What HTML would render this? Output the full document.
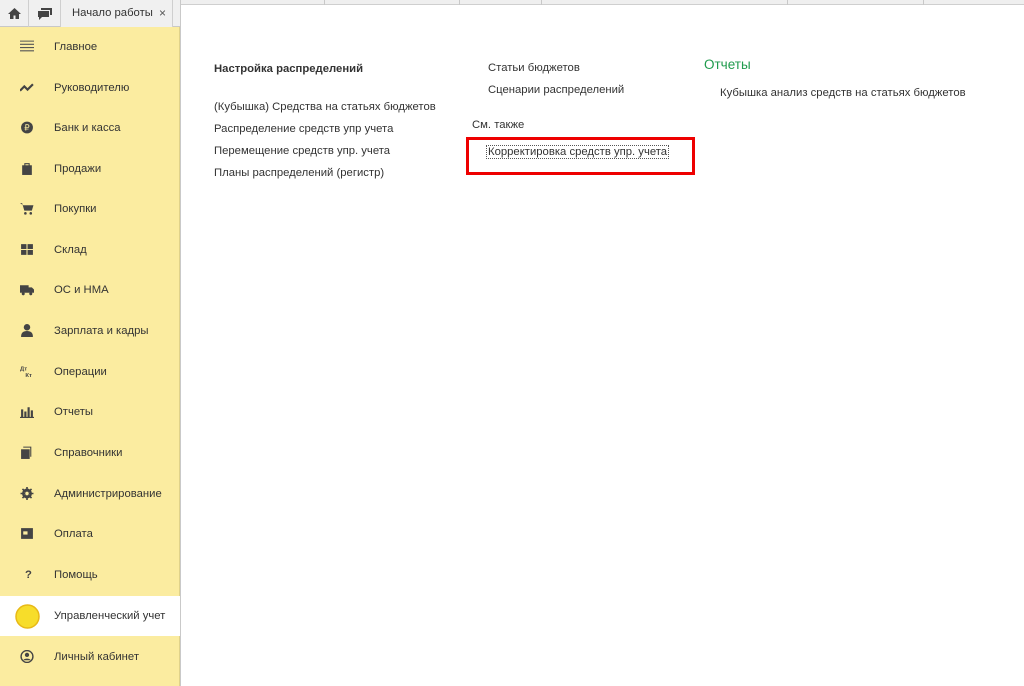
<!DOCTYPE html>
<html><head><meta charset="utf-8"><style>
*{margin:0;padding:0;box-sizing:border-box}
body{width:1024px;height:686px;overflow:hidden;background:#fff;font-family:"Liberation Sans",Arial,sans-serif;color:#333;position:relative}
#top{position:absolute;left:0;top:0;width:181px;height:27px;background:#f0f0f0;border-bottom:1px solid #c8c8c8}
.tb{position:absolute;top:0;height:27px;border-right:1px solid #cfcfcf}
#strip{position:absolute;left:181px;top:0;right:0;height:5px;background:#efefef;border-bottom:1px solid #cfcfcf}
.sep{position:absolute;top:0;width:1px;height:5px;background:#c8c8c8}
#side{position:absolute;left:0;top:27px;width:180px;height:659px;background:#fbeca0;border-right:1px solid #e0d28a}
#vline{position:absolute;left:180px;top:0;width:1px;height:686px;background:#c9c9c9}
.it{position:absolute;left:0;width:180px;height:40px;font-size:11.3px;line-height:40px}
.it span{position:absolute;left:54px}
.ic{position:absolute;left:20px;top:13px;width:14px;height:13px}
.t{position:absolute;font-size:11.3px;white-space:nowrap;color:#333}
</style></head><body>
<div id="top">
 <div class="tb" style="left:0;width:29px"><svg style="position:absolute;left:8px;top:8px" width="13" height="11" viewBox="0 0 13 11"><path d="M6.5 0L0 6h2v5h3.5V7.5h2V11H11V6h2z" fill="#444"/></svg></div>
 <div class="tb" style="left:29px;width:32px"><svg style="position:absolute;left:9px;top:8px" width="14" height="12" viewBox="0 0 14 12"><path d="M3 0h11v7h-2V2H3z M0 3h11v6H4l-3 3V9H0z" fill="#444"/></svg></div>
 <div class="tb" style="left:61px;width:112px;background:#f0f0f0"><span style="position:absolute;left:11px;top:7px;font-size:11.3px;color:#333">Начало работы</span><span style="position:absolute;left:98px;top:6px;font-size:12px;color:#555">×</span></div>
</div>
<div id="strip"><div class="sep" style="left:143px"></div><div class="sep" style="left:278px"></div><div class="sep" style="left:360px"></div><div class="sep" style="left:606px"></div><div class="sep" style="left:742px"></div></div>
<div id="side">
<div class="it" style="top:0"><svg class="ic" viewBox="0 0 13 12"><path d="M0 1h13M0 4h13M0 7h13M0 10h13" stroke="#555" stroke-width="1"/></svg><span>Главное</span></div>
<div class="it" style="top:41px"><svg class="ic" viewBox="0 0 13 12"><path d="M0 9l4-4 3 3 5-5" stroke="#444" stroke-width="2" fill="none"/></svg><span>Руководителю</span></div>
<div class="it" style="top:81px"><svg class="ic" viewBox="0 0 13 12"><circle cx="6.5" cy="6" r="5.5" fill="#444"/><text x="4" y="9" font-size="8" fill="#fbeca0" font-family="Liberation Sans">₽</text></svg><span>Банк и касса</span></div>
<div class="it" style="top:122px"><svg class="ic" viewBox="0 0 13 12"><path d="M2 3h9v9H2z" fill="#444"/><path d="M4.5 4V1.5h4V4" stroke="#444" fill="none"/></svg><span>Продажи</span></div>
<div class="it" style="top:162px"><svg class="ic" viewBox="0 0 13 12"><path d="M0 1h2l2 7h7l1.5-5H3" fill="#444"/><circle cx="5" cy="10.5" r="1.2" fill="#444"/><circle cx="10" cy="10.5" r="1.2" fill="#444"/></svg><span>Покупки</span></div>
<div class="it" style="top:203px"><svg class="ic" viewBox="0 0 13 12"><path d="M1 1h5v4.5H1zM7 1h5v4.5H7zM1 6.5h5V11H1zM7 6.5h5V11H7z" fill="#444"/></svg><span>Склад</span></div>
<div class="it" style="top:243px"><svg class="ic" viewBox="0 0 13 12"><path d="M0 2h8v7H0zM8 4h3l2 2v3H8z" fill="#444"/><circle cx="3" cy="10" r="1.4" fill="#444"/><circle cx="10" cy="10" r="1.4" fill="#444"/></svg><span>ОС и НМА</span></div>
<div class="it" style="top:284px"><svg class="ic" viewBox="0 0 13 12"><circle cx="6.5" cy="3" r="3" fill="#444"/><path d="M1 12c0-4 2-5.5 5.5-5.5S12 8 12 12z" fill="#444"/></svg><span>Зарплата и кадры</span></div>
<div class="it" style="top:325px"><svg class="ic" viewBox="0 0 13 12"><text x="0" y="5" font-size="5.5" fill="#444" font-family="Liberation Sans" font-weight="bold">Дт</text><text x="5" y="11" font-size="5.5" fill="#444" font-family="Liberation Sans" font-weight="bold">Кт</text></svg><span>Операции</span></div>
<div class="it" style="top:365px"><svg class="ic" viewBox="0 0 13 12"><path d="M1 4h2v7H1zM4 6h2v5H4zM7 2h2v9H7zM10 5h2v6h-2zM0 11h13v1H0z" fill="#444"/></svg><span>Отчеты</span></div>
<div class="it" style="top:406px"><svg class="ic" viewBox="0 0 13 12"><path d="M1 3h8v9H1z" fill="#444"/><path d="M3 1h7v9" stroke="#444" fill="none"/></svg><span>Справочники</span></div>
<div class="it" style="top:447px"><svg class="ic" viewBox="0 0 13 12"><circle cx="6.5" cy="6" r="3.5" stroke="#444" stroke-width="2.2" fill="none"/><path d="M6.5 0v12M0.5 6h12M2.3 1.8l8.4 8.4M10.7 1.8l-8.4 8.4" stroke="#444" stroke-width="1.5"/><circle cx="6.5" cy="6" r="1.6" fill="#fbeca0"/></svg><span>Администрирование</span></div>
<div class="it" style="top:487px"><svg class="ic" viewBox="0 0 13 12"><path d="M1 1h11v10H1z" fill="#444"/><path d="M3 4h4v3H3z" fill="#fbeca0"/></svg><span>Оплата</span></div>
<div class="it" style="top:528px"><span style="left:25px;font-weight:bold;color:#444">?</span><span>Помощь</span></div>
<div class="it" style="top:569px;background:#fff"><svg style="position:absolute;left:15px;top:8px" width="25" height="25"><circle cx="12.5" cy="12.5" r="11.5" fill="#f7dd2a" stroke="#e8b917" stroke-width="1.5"/></svg><span>Управленческий учет</span></div>
<div class="it" style="top:610px"><svg class="ic" viewBox="0 0 13 12"><circle cx="6.5" cy="6" r="5.5" stroke="#444" stroke-width="1.3" fill="none"/><circle cx="6.5" cy="4.5" r="2" fill="#444"/><path d="M3 9.5c1-2 6-2 7 0" fill="#444"/></svg><span>Личный кабинет</span></div>
</div>
<div id="vline"></div>
<div class="t" style="left:214px;top:63px;font-weight:bold">Настройка распределений</div>
<div class="t" style="left:214px;top:101px">(Кубышка) Средства на статьях бюджетов</div>
<div class="t" style="left:214px;top:123px">Распределение средств упр учета</div>
<div class="t" style="left:214px;top:145px">Перемещение средств упр. учета</div>
<div class="t" style="left:214px;top:167px">Планы распределений (регистр)</div>
<div class="t" style="left:488px;top:62px">Статьи бюджетов</div>
<div class="t" style="left:488px;top:84px">Сценарии распределений</div>
<div class="t" style="left:472px;top:119px">См. также</div>
<div class="t" style="left:486px;top:145px;border:1px dotted #555;padding:0 1px">Корректировка средств упр. учета</div>
<div style="position:absolute;left:466px;top:137px;width:229px;height:38px;border:3px solid #ee0000"></div>
<div class="t" style="left:704px;top:57px;font-size:13.5px;color:#1f9b4d">Отчеты</div>
<div class="t" style="left:720px;top:87px">Кубышка анализ средств на статьях бюджетов</div>
</body></html>
